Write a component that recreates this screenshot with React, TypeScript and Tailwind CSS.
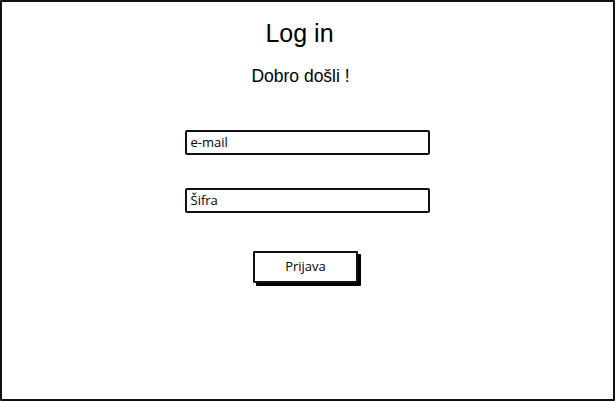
import React from "react";

export default function App() {
  return (
    <div className="w-[616px] h-[402px] bg-white font-['Liberation_Sans',Arial,sans-serif]">
      <div className="w-[615px] h-[401px] border-2 border-[#111] rounded-[1px] flex flex-col items-center text-black">
        <div className="mt-[17px] h-[28px] leading-[28px] text-[25px] -translate-x-[8px]">Log in</div>
        <div className="mt-[19px] h-[20px] leading-[20px] text-[17.5px] -translate-x-[7px]">Dobro došli !</div>
        <div className="mt-[44px] w-[245px] h-[25px] border-2 border-[#111] rounded-[2px] flex items-center px-[4px] text-[13px] -ml-[1px] font-['Open_Sans','Noto_Sans',sans-serif]">
          e-mail
        </div>
        <div className="mt-[33px] w-[245px] h-[25px] border-2 border-[#111] rounded-[2px] flex items-center px-[4px] text-[13px] -ml-[1px] font-['Open_Sans','Noto_Sans',sans-serif]">
          Šifra
        </div>
        <div className="mt-[38px] w-[105px] h-[32px] border-2 border-[#111] rounded-[1px] flex items-center justify-center text-[13px] shadow-[3px_3px_0_0_#000] bg-white -translate-x-[2px] font-['Open_Sans','Noto_Sans',sans-serif]">
          Prijava
        </div>
      </div>
    </div>
  );
}
